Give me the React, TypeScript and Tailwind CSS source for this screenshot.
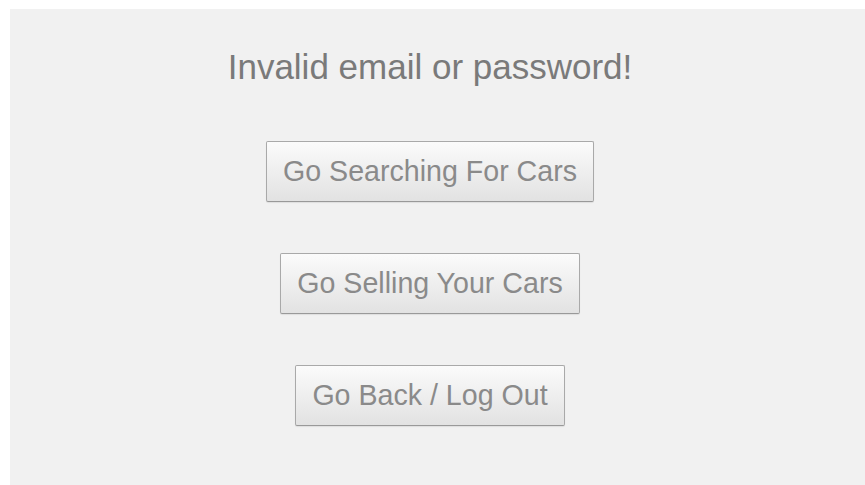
const buttons = ['Go Searching For Cars', 'Go Selling Your Cars', 'Go Back / Log Out'];

function MenuButton({ label }: { label: string }) {
  return (
    <button
      type="button"
      className="rounded-[2px] border border-[#a9a9a9] border-b-[#999] bg-gradient-to-b from-[#fbfbfb] to-[#e2e2e2] px-[16px] py-[13px] text-[28.6px] leading-[33px] text-[#8a8a8a] shadow-[0_1px_1px_rgba(0,0,0,0.08)]"
    >
      {label}
    </button>
  );
}

export default function App() {
  return (
    <div
      className="h-[485px] w-full overflow-hidden bg-white pl-[10px] pt-[9px]"
      style={{ fontFamily: '"Liberation Sans", Arial, sans-serif' }}
    >
      <div className="h-full bg-[#f1f1f1]">
        <div className="flex w-[840px] flex-col items-center pt-[38px]">
          <h1 className="text-[35px] leading-[40px] font-normal text-[#7a7a7a]">
            Invalid email or password!
          </h1>
          <div className="mt-[54px] flex flex-col items-center gap-[51px]">
            {buttons.map((b) => (
              <MenuButton key={b} label={b} />
            ))}
          </div>
        </div>
      </div>
    </div>
  );
}
